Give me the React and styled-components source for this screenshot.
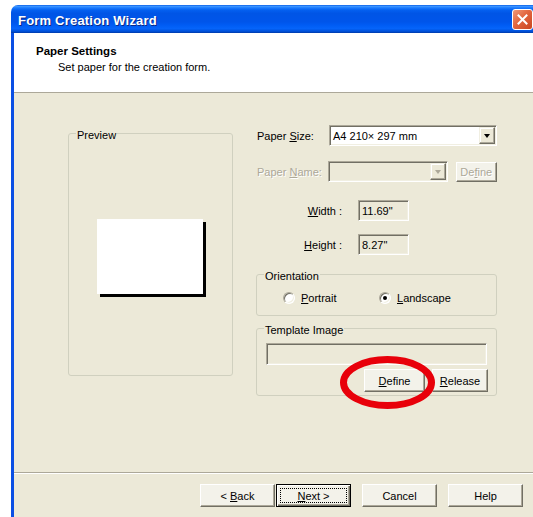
import React from "react";
import styled, { createGlobalStyle } from "styled-components";

const GlobalStyle = createGlobalStyle`
  html, body {
    margin: 0;
    padding: 0;
    background: #fff;
    overflow: hidden;
  }
  body {
    font-family: "Liberation Sans", Arial, sans-serif;
    font-size: 11px;
    color: #000;
  }
`;

const Window = styled.div`
  margin: 5px 0 0 11px;
  width: 530px;
  height: 530px;
  display: flex;
  flex-direction: column;
  border-radius: 7px 7px 0 0;
  overflow: hidden;
`;

const TitleBar = styled.div`
  height: 28px;
  flex: none;
  display: flex;
  align-items: center;
  justify-content: space-between;
  padding: 0 8px 0 7px;
  background: linear-gradient(
    to bottom,
    #0a5fe6 0%,
    #3d95ff 5%,
    #1a7bff 10%,
    #0460f0 18%,
    #0055e6 30%,
    #0055ea 60%,
    #005cf4 72%,
    #0564fa 84%,
    #0050d8 94%,
    #003aa8 100%
  );
`;

const Title = styled.span`
  color: #fff;
  font-size: 13px;
  font-weight: bold;
  padding-top: 2px;
  text-shadow: 1px 1px 0 #0a2a8a;
  letter-spacing: 0.2px;
`;

const CloseButton = styled.div`
  width: 19px;
  height: 19px;
  margin-top: 1px;
  border: 1px solid #fff;
  border-radius: 3px;
  background: linear-gradient(135deg, #f09a7a 0%, #e2663f 45%, #c94622 100%);
  display: flex;
  align-items: center;
  justify-content: center;
`;

const Client = styled.div`
  flex: 1;
  display: flex;
  flex-direction: column;
  background: #ece9d8;
  border-left: 3px solid #0a4fe4;
  border-right: 3px solid #0a4fe4;
`;

const Header = styled.div`
  height: 60px;
  flex: none;
  box-sizing: border-box;
  background: #fff;
  border-bottom: 1px solid #aca899;
  padding: 11px 0 0 22px;
`;

const HeaderTitle = styled.div`
  font-weight: bold;
  font-size: 11.5px;
  line-height: 14px;
`;

const HeaderText = styled.div`
  line-height: 14px;
  margin: 2px 0 0 22px;
`;

const Body = styled.div`
  height: 380px;
  flex: none;
  box-sizing: border-box;
  display: flex;
  gap: 23px;
  padding: 32px 0 0 54px;
  border-bottom: 1px solid #aca899;
  box-shadow: 0 1px 0 #fff;
`;

const Group = styled.div`
  position: relative;
  box-sizing: border-box;
  width: ${(p) => p.$width}px;
  height: ${(p) => p.$height}px;
  margin-top: ${(p) => p.$top || 0}px;
  border: 1px solid #d0d0bf;
  border-radius: 3px;
`;

const Caption = styled.span`
  position: absolute;
  top: -5px;
  left: 7px;
  padding: 0 1px;
  line-height: 12px;
  background: #ece9d8;
`;

const PreviewArea = styled.div`
  padding: 85px 0 0 28px;
`;

const Paper = styled.div`
  width: 106px;
  height: 75px;
  background: #fff;
  box-shadow: 3px 3px 0 #000;
`;

const Column = styled.div`
  width: 241px;
  display: flex;
  flex-direction: column;
`;

const Row = styled.div`
  display: flex;
  align-items: center;
  height: 21px;
  margin-top: ${(p) => p.$top || 0}px;
`;

const Label = styled.span`
  width: 72px;
  padding-left: 1px;
  color: ${(p) => (p.$disabled ? "#aca899" : "#000")};
  text-shadow: ${(p) => (p.$disabled ? "1px 1px 0 #fff" : "none")};
`;

const SizeLabel = styled.span`
  width: 86px;
  margin-right: 16px;
  text-align: right;
`;

const Key = styled.u`
  text-underline-offset: 1px;
`;

const Sunken = styled.div`
  box-sizing: border-box;
  display: flex;
  align-items: center;
  width: ${(p) => p.$width}px;
  height: ${(p) => p.$height || 21}px;
  padding: 0 2px 0 3px;
  background: ${(p) => (p.$white ? "#fff" : "#ece9d8")};
  border: 1px solid;
  border-color: #aca899 #fff #fff #aca899;
  box-shadow: inset 1px 1px 0 #716f64, inset -1px -1px 0 #f1efe2;
`;

const ComboText = styled.span`
  flex: 1;
`;

const ArrowButton = styled.div`
  box-sizing: border-box;
  width: 16px;
  height: 17px;
  margin-right: -1px;
  background: #ece9d8;
  border: 1px solid;
  border-color: #f1efe2 #716f64 #716f64 #f1efe2;
  box-shadow: inset -1px -1px 0 #aca899, inset 1px 1px 0 #fff;
  display: flex;
  align-items: center;
  justify-content: center;
`;

const Arrow = styled.span`
  width: 0;
  height: 0;
  border-left: 3.5px solid transparent;
  border-right: 3.5px solid transparent;
  border-top: 4px solid ${(p) => (p.$disabled ? "#aca899" : "#000")};
  margin-top: 1px;
`;

const Button = styled.div`
  position: relative;
  box-sizing: border-box;
  width: ${(p) => p.$width}px;
  height: ${(p) => p.$height || 23}px;
  margin-left: ${(p) => p.$left || 0}px;
  display: flex;
  align-items: center;
  justify-content: center;
  background: #f3f2ea;
  border: 1px solid;
  border-color: ${(p) =>
    p.$default ? "#000" : "#fff #716f64 #716f64 #fff"};
  box-shadow: ${(p) =>
    p.$default
      ? "inset 1px 1px 0 #fff, inset -1px -1px 0 #716f64, inset -2px -2px 0 #aca899"
      : "inset -1px -1px 0 #aca899"};
  color: ${(p) => (p.$disabled ? "#aca899" : "#000")};
  text-shadow: ${(p) => (p.$disabled ? "1px 1px 0 #fff" : "none")};
`;

const FocusRing = styled.span`
  position: absolute;
  inset: 3px;
  border: 1px dotted #000;
`;

const Radios = styled.div`
  display: flex;
  align-items: center;
  padding: 16px 0 0 26px;
`;

const RadioItem = styled.label`
  display: flex;
  align-items: center;
  gap: 6px;
  width: ${(p) => p.$width || "auto"}px;
  height: 13px;
`;

const RadioCircle = styled.span`
  box-sizing: border-box;
  width: 12px;
  height: 12px;
  border-radius: 50%;
  background: #fff;
  border: 1px solid;
  border-color: #aca899 #fff #fff #aca899;
  box-shadow: inset 1px 1px 0 #716f64, inset -1px -1px 0 #f1efe2;
  display: flex;
  align-items: center;
  justify-content: center;
  &::after {
    content: "";
    width: 4px;
    height: 4px;
    border-radius: 50%;
    background: ${(p) => (p.$checked ? "#000" : "transparent")};
  }
`;

const TemplateBody = styled.div`
  padding: 14px 0 0 9px;
`;

const TemplateButtons = styled.div`
  display: flex;
  justify-content: flex-end;
  margin-top: 4px;
  padding-right: 8px;
`;

const Marker = styled.svg`
  position: absolute;
  left: 83px;
  top: 27px;
  pointer-events: none;
`;

const Footer = styled.div`
  display: flex;
  padding: 11px 0 0 186px;
`;

const App = () => {
  return (
    <>
      <GlobalStyle />
      <Window>
        <TitleBar>
          <Title>Form Creation Wizard</Title>
          <CloseButton>
            <svg width="11" height="11" viewBox="0 0 11 11">
              <path
                d="M1.5 1.5 L9.5 9.5 M9.5 1.5 L1.5 9.5"
                stroke="#fff"
                strokeWidth="2"
                strokeLinecap="square"
              />
            </svg>
          </CloseButton>
        </TitleBar>
        <Client>
          <Header>
            <HeaderTitle>Paper Settings</HeaderTitle>
            <HeaderText>Set paper for the creation form.</HeaderText>
          </Header>
          <Body>
            <Group $width={165} $height={243} $top={8}>
              <Caption>Preview</Caption>
              <PreviewArea>
                <Paper />
              </PreviewArea>
            </Group>
            <Column>
              <Row>
                <Label>
                  Paper <Key>S</Key>ize:
                </Label>
                <Sunken $width={168} $white>
                  <ComboText>A4 210× 297 mm</ComboText>
                  <ArrowButton>
                    <Arrow />
                  </ArrowButton>
                </Sunken>
              </Row>
              <Row $top={15}>
                <Label $disabled>
                  Paper <Key>N</Key>ame:
                </Label>
                <Sunken $width={121}>
                  <ComboText />
                  <ArrowButton>
                    <Arrow $disabled />
                  </ArrowButton>
                </Sunken>
                <Button $width={42} $height={20} $left={8} $disabled>
                  De<Key>f</Key>ine
                </Button>
              </Row>
              <Row $top={18}>
                <SizeLabel>
                  <Key>W</Key>idth :
                </SizeLabel>
                <Sunken $width={51}>11.69"</Sunken>
              </Row>
              <Row $top={13}>
                <SizeLabel>
                  <Key>H</Key>eight :
                </SizeLabel>
                <Sunken $width={51}>8.27"</Sunken>
              </Row>
              <Group $width={241} $height={42} $top={19}>
                <Caption>Orientation</Caption>
                <Radios>
                  <RadioItem $width={96}>
                    <RadioCircle />
                    <span>
                      <Key>P</Key>ortrait
                    </span>
                  </RadioItem>
                  <RadioItem>
                    <RadioCircle $checked />
                    <span>
                      <Key>L</Key>andscape
                    </span>
                  </RadioItem>
                </Radios>
              </Group>
              <Group $width={241} $height={68} $top={12}>
                <Caption>Template Image</Caption>
                <TemplateBody>
                  <Sunken $width={221} $height={22} />
                  <TemplateButtons>
                    <Button $width={61}>
                      <span>
                        <Key>D</Key>efine
                      </span>
                    </Button>
                    <Button $width={56} $left={7}>
                      <span>
                        <Key>R</Key>elease
                      </span>
                    </Button>
                  </TemplateButtons>
                </TemplateBody>
                <Marker width="95" height="53" viewBox="0 0 95 53">
                  <ellipse
                    cx="47.5"
                    cy="26.5"
                    rx="44"
                    ry="23"
                    fill="none"
                    stroke="#e8000a"
                    strokeWidth="7"
                  />
                </Marker>
              </Group>
            </Column>
          </Body>
          <Footer>
            <Button $width={75}>
              <span>
                &lt; <Key>B</Key>ack
              </span>
            </Button>
            <Button $width={75} $left={1} $default>
              <FocusRing />
              <span>
                <Key>N</Key>ext &gt;
              </span>
            </Button>
            <Button $width={75} $left={11}>
              Cancel
            </Button>
            <Button $width={75} $left={11}>
              Help
            </Button>
          </Footer>
        </Client>
      </Window>
    </>
  );
};

export default App;
